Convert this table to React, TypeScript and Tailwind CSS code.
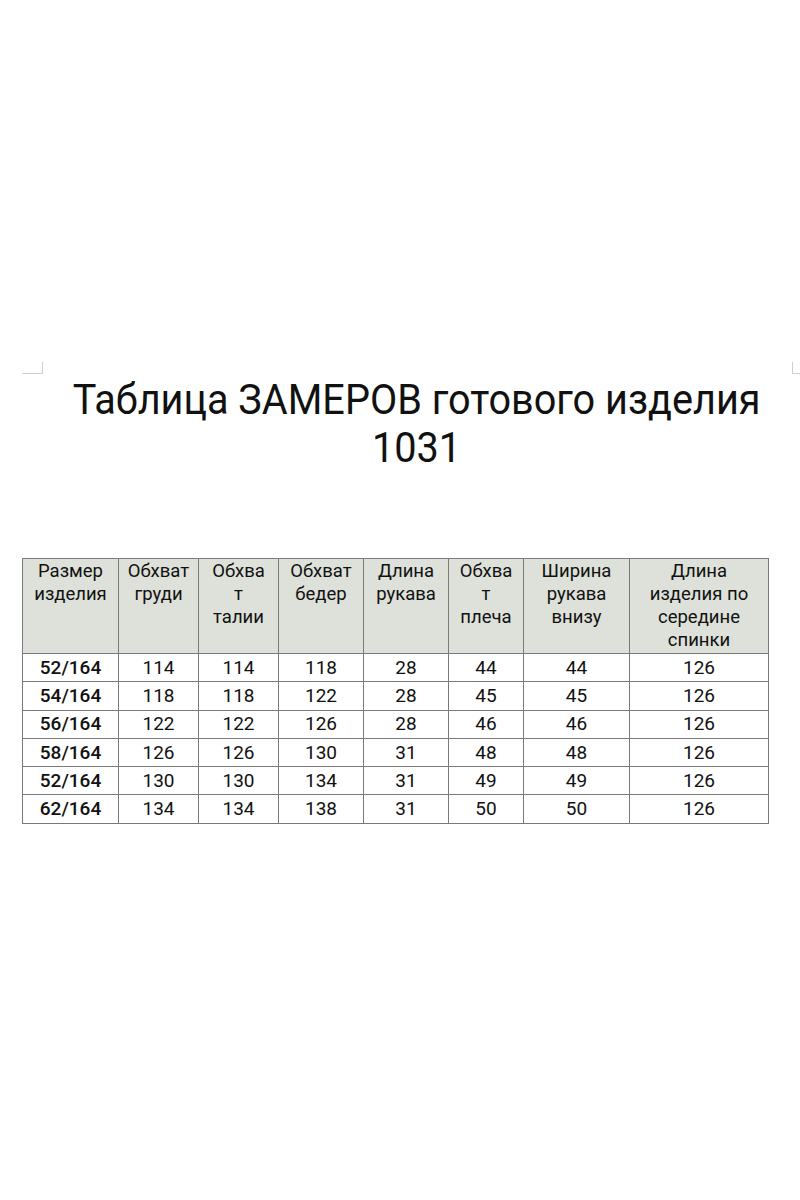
const headers: string[][] = [
  ['Размер', 'изделия'],
  ['Обхват', 'груди'],
  ['Обхва', 'т', 'талии'],
  ['Обхват', 'бедер'],
  ['Длина', 'рукава'],
  ['Обхва', 'т', 'плеча'],
  ['Ширина', 'рукава', 'внизу'],
  ['Длина', 'изделия по', 'середине', 'спинки'],
];

const widths = ['w-[96px]', 'w-[80px]', 'w-[80px]', 'w-[85px]', 'w-[85px]', 'w-[75px]', 'w-[106px]', 'w-[139px]'];

const rows: string[][] = [
  ['52/164', '114', '114', '118', '28', '44', '44', '126'],
  ['54/164', '118', '118', '122', '28', '45', '45', '126'],
  ['56/164', '122', '122', '126', '28', '46', '46', '126'],
  ['58/164', '126', '126', '130', '31', '48', '48', '126'],
  ['52/164', '130', '130', '134', '31', '49', '49', '126'],
  ['62/164', '134', '134', '138', '31', '50', '50', '126'],
];

export default function App() {
  return (
    <div className="w-[800px] h-[1200px] bg-white text-[#111] font-['Roboto','Liberation_Sans',sans-serif]">
      <div className="relative h-[375px]">
        {/* crop marks */}
        <div className="absolute left-[22px] top-[362px] w-[21px] h-[12px] border-r border-b border-[#cfcfcf]" />
        <div className="absolute left-[792px] top-[362px] w-[8px] h-[12px] border-l border-b border-[#cfcfcf]" />
      </div>
      <div className="pl-[36px] text-center text-[43px] leading-[48px] scale-x-[0.922]">
        <div>Таблица ЗАМЕРОВ готового изделия</div>
        <div>1031</div>
      </div>
      <table className="mt-[87px] ml-[22px] w-[746px] table-fixed border-collapse">
        <thead>
          <tr className="h-[95px] bg-[#dde1d9]">
            {headers.map((h, i) => (
              <th
                key={i}
                className={`${widths[i]} border border-[#7a7a7a] align-top pt-[1px] px-0 text-[18.5px] leading-[23px] font-normal`}
              >
                {h.map((line, j) => (
                  <div key={j}>{line}</div>
                ))}
              </th>
            ))}
          </tr>
        </thead>
        <tbody>
          {rows.map((r, i) => (
            <tr key={i} className="h-[28.3px]">
              {r.map((c, j) => (
                <td
                  key={j}
                  className={`border border-[#7a7a7a] p-0 text-center text-[19px] leading-[26px] ${j === 0 ? 'font-medium' : ''}`}
                >
                  {c}
                </td>
              ))}
            </tr>
          ))}
        </tbody>
      </table>
    </div>
  );
}
